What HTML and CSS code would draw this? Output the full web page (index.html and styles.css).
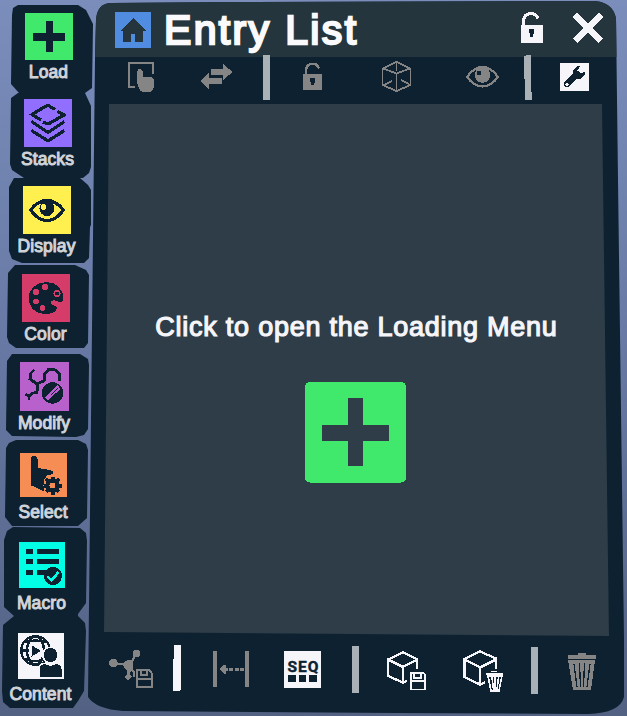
FILE: index.html
```html
<!DOCTYPE html>
<html lang="en">
<head>
<meta charset="utf-8">
<title>Entry List</title>
<link rel="stylesheet" href="styles.css">
</head>
<body>
<nav class="sidebar">
  <button class="tab load">
    <svg class="tile" viewBox="25 13 48 47"><rect class="bg" x="25" y="13" width="48" height="47" rx="1.5"/><path d="M46 21h7v12h12v8H53v11h-7V41H33v-8h13z"/></svg>
    <span class="label">Load</span>
  </button>
  <button class="tab stacks">
    <svg class="tile" viewBox="24 99 48 48"><rect class="bg" x="24" y="99" width="48" height="48" rx="1.5"/><path class="line" d="M41 120l-9-5.5L45 106.500q3-1.500 5 0l5 3M57.500 111.500L64 115l-14 8q-3 1-7-1M31.500 121.500l15 10q1.500 1 3 0l15-10M31.500 130.500l15 9.500q1.500 1 3 0l15-9.500"/></svg>
    <span class="label">Stacks</span>
  </button>
  <button class="tab display">
    <svg class="tile" viewBox="23 186 48 48"><rect class="bg" x="23" y="186" width="48" height="48" rx="1.500"/><path class="line" d="M30.500 210Q38 200.500 47 200.500T63.500 210Q56 220.500 47 220.500T30.500 210z"/><circle cx="47" cy="208.500" r="7.500"/><circle class="bg" cx="43.500" cy="207" r="2.700"/></svg>
    <span class="label">Display</span>
  </button>
  <button class="tab color">
    <svg class="tile" viewBox="21.500 274 48 48"><rect class="bg" x="21.500" y="274" width="48" height="48" rx="1.500"/><path d="M46 282C56 282 63 290 63 298C63 303 59 303 56 301C51 299 48 302 52 305C56 306 58 308 55 311C52 314 47 314 44 314C34 314 28 306 28 298C28 289 36 282 46 282z"/><g class="bg"><circle cx="44.500" cy="287" r="3"/><circle cx="35.500" cy="292" r="3"/><circle cx="35.500" cy="301.500" r="3"/><circle cx="42" cy="308" r="3"/><circle cx="56.500" cy="293.500" r="3.600"/></g><circle cx="56.500" cy="293.500" r="2"/></svg>
    <span class="label">Color</span>
  </button>
  <button class="tab modify">
    <svg class="tile" viewBox="20 362 49 49"><rect class="bg" x="20" y="362" width="49" height="49" rx="1.500"/><path class="line" stroke-width="2.800" d="M34 370l-3 3-1 6 7 5 7.500-3.500M44.500 381v-7l4-4.500h6l5 4v7M37.500 384l-.5 8.500-4 .5-4 3.500-3.500-2.500M29 396v4"/><circle cx="52.500" cy="393" r="10.700"/><path class="stroke-bg" stroke-width="4.600" d="M59 387L49 396.500l-2.500 2.500"/><path class="line" stroke-width="1.200" d="M57.500 388.500l-7 7"/></svg>
    <span class="label">Modify</span>
  </button>
  <button class="tab select">
    <svg class="tile" viewBox="20 453 47 44"><rect class="bg" x="20" y="453" width="47" height="44"/><path d="M31 459q0-3 3.200-3t3.300 3v9l9 1.500 6 1.500 1 3-6 1-4 6v10l-12-5.500z"/><circle class="bg" cx="52.500" cy="485.500" r="9"/><circle cx="52.500" cy="485.500" r="7"/><path class="line" stroke-width="4" d="M52.500 476.500v18M43.500 485.500h18M46 479l13 13M59 479l-13 13"/><circle class="bg" cx="52.500" cy="485.500" r="3"/></svg>
    <span class="label">Select</span>
  </button>
  <button class="tab macro">
    <svg class="tile" viewBox="19 542 46 46"><rect class="bg" x="19" y="542" width="46" height="46" rx="1.500"/><path d="M26 549h7v5h-7zM37 549h22v5H37zM26 559h7v5h-7zM37 559h22v5H37zM26 570h7v5h-7zM37 570h12v5H37z"/><circle cx="53" cy="576" r="9"/><path class="stroke-bg" stroke-width="2.700" d="M47.500 576.500l4 4 7-8.500"/></svg>
    <span class="label">Macro</span>
  </button>
  <button class="tab content">
    <svg class="tile" viewBox="18 633 46 46"><rect class="bg" x="18" y="633" width="46" height="46" rx="1.500"/><g class="line" stroke-width="2.300"><circle cx="35.500" cy="650.500" r="14.300"/><ellipse cx="35.500" cy="650.500" rx="8.500" ry="14"/><path d="M25 642q10-3 21 0M24 659q11 4 22 0M21 650.500h8"/></g><path d="M31.500 645l9.500 6-9.500 5.500z"/><circle class="bg" cx="50.500" cy="655" r="8.600"/><path class="bg" d="M38 678v-9q0-6 7-6.500h12q5 1 5.500 6V678z"/><circle cx="50.500" cy="655" r="7"/><path d="M39.500 677v-8q0-4 5.500-5l5.500 2 6-2q5 1 5 5v8z"/></svg>
    <span class="label">Content</span>
  </button>
</nav>

<main class="panel">
  <header class="header">
    <svg class="home" viewBox="115 12 36 36"><rect class="blue" x="115" y="12" width="36" height="36" rx="1.500"/><path class="house" d="M120 31l13-13 13 13h-3v11h-8v-8h-4v8h-8V31z"/></svg>
    <h1 class="title">Entry List</h1>
    <svg class="unlock white" viewBox="519 10 26 36"><path d="M521 25h22v18h-22z"/><path class="out" stroke-width="3.400" d="M523.500 26v-5C524 11.500 536 11.500 538 18.500"/><path class="hole" d="M529 29h5v4l-1 1v3h-3v-3l-1-1z"/></svg>
    <svg class="close white" viewBox="571 11 34 34"><path class="out" stroke-width="6" d="M575 15l26 26M601 15l-26 26"/></svg>
  </header>

  <div class="toolbar top">
    <svg viewBox="120 55 70 48"><path class="out" stroke-width="2.200" d="M135 87h-6V63h24v11"/><path d="M137.500 71q2-5 5 0v6l7-.5q4 1 4.500 4v6q-1 5-5 5.500h-6q-3-1-4-4l-2-5z"/></svg>
    <svg viewBox="190 55 65 48"><path d="M211 69h12v-5l9.500 8-9.500 8v-5h-12zM222 84h-13v6l-9-9 9-8v5h13z"/></svg>
    <svg class="pale" viewBox="255 55 25 48"><path d="M263 55h7v45h-7z"/></svg>
    <svg viewBox="280 55 65 48"><path d="M303 74h19v16h-19z"/><path class="out" stroke-width="2.400" d="M306 75v-5C307 62 317 62 319 68.500"/><path class="hole" d="M310 78h5v4l-1 1v2h-3v-2l-1-1z"/></svg>
    <svg viewBox="345 55 95 48"><path class="out" stroke-width="1.800" d="M396.500 62l14 6.500V85l-14 6-14-6V68.500zM383 68.500l13.500 5 13.500-5M396.500 73v18M396.500 62v9M384 85l8-4M409 84l-8-4"/></svg>
    <svg viewBox="440 55 75 48"><path class="out" stroke-width="2.200" d="M467 77q7-10 15.500-10T498 77q-7 9.500-15.500 9.500T467 77z"/><circle cx="482.500" cy="75" r="7.800"/><circle class="hole" cx="479" cy="73" r="2.500"/></svg>
    <svg class="pale" viewBox="515 55 30 48"><path d="M524 56l3-1h4l.5 37 .5 8h-7z"/></svg>
    <svg class="white" viewBox="545 55 60 48"><rect x="560" y="63" width="29" height="28" rx="1.500"/><path class="ink" stroke-width="6" stroke-linecap="round" d="M567 84l8-8"/><path class="hole" d="M580 66l-3 .5-4 4v4l3 4h5l4.500-4-.5-3-4.500 2-3-3z"/><circle cx="567" cy="84.500" r="1.600"/></svg>
  </div>

  <section class="stage">
    <p class="message">Click to open the Loading Menu</p>
    <svg class="add" viewBox="305 382 101 101"><rect class="green" x="305" y="382" width="101" height="100.500" rx="5"/><path class="cross" d="M348 398h15v27h26v16h-26v25h-15v-25h-26v-16h26z"/></svg>
  </section>

  <div class="toolbar bottom">
    <svg viewBox="100 640 65 60"><circle cx="113.500" cy="663" r="4.300"/><circle cx="136.500" cy="653.500" r="3.700"/><path d="M124 662l5-2.500 4 1.500v7l-2 4h-3l-4-4z"/><path class="out" stroke-width="2.400" d="M113 663l15 2M136 654l-6 11M128.500 668v9M125.500 676l2.500 3 3-3M131 669l3 3v5"/><path class="out" stroke-width="2" d="M137 670h12l2.500 3v13.500H137zM137 679h14M141 670v5h6v-5"/></svg>
    <svg class="white" viewBox="165 640 30 60"><path d="M174 645h7l-.5 46h-7L173 659h1z"/></svg>
    <svg viewBox="195 640 70 60"><path d="M213 651h4v36h-4zM245 651h4v36h-4zM219 669l5-4h2v2.500h1.500v3.500H226v2.500h-2zM229 667.500h4v3.500h-4zM234.500 667.500h4v3.500h-4zM240 667.500h3.500v3.500H240z"/></svg>
    <svg class="white" viewBox="265 640 75 60"><rect x="284" y="651" width="37" height="37" rx="1.500"/><text class="seq" x="287.500" y="672" textLength="31">SEQ</text><path class="hole" d="M288 675h8v7h-8zM299 675h7v7h-7zM309 675h8v7h-8z"/></svg>
    <svg class="pale" viewBox="340 640 30 60"><path d="M352 646h7v47h-7z"/></svg>
    <svg class="white" viewBox="370 640 75 60"><path class="out" stroke-width="2.300" d="M417 669v-10l-14-6.500-15 7V676l15 6.500 4-1.500M388 659.500l15 7.500 14-7.500M403 667v16"/><path class="out" stroke-width="1.800" d="M411 673h12.500l1.800 2v14.500H411zM411 681h14M414 673v5h7v-5"/></svg>
    <svg class="white" viewBox="445 640 75 60"><path class="out" stroke-width="2.300" d="M496 669v-10.500l-16-7-15.500 7.500V677l15.500 7.500 5-2M464.500 659.500l15.500 8 16-8M480 667v18"/><path d="M491 671h6v1h-6zM486 673h17v2h-17z"/><path class="out" stroke-width="1.600" d="M488 676l3 15h8l3-15zM492 677l1.500 13M495 677v13M498.500 677l-1.500 13"/></svg>
    <svg class="pale" viewBox="520 640 30 60"><path d="M531 647h7v47h-7z"/></svg>
    <svg viewBox="550 640 60 60"><path d="M578 653h8v2h10v4h-28v-4h10zM568 660h27l-4 30h-18z"/><path class="ink" stroke-width="1.300" d="M574 664l3 23M579.500 663l1 24M584.500 663l-1 24M590 664l-3 23"/></svg>
  </div>
</main>
</body>
</html>
```
FILE: styles.css
```css
* {
  box-sizing: border-box;
}

body {
  margin: 0;
  width: 627px;
  height: 716px;
  display: flex;
  overflow: hidden;
  background: linear-gradient(#7b8dbb, #6476a0 55%, #536183);
  font-family: "Liberation Sans", Arial, sans-serif;
}

svg {
  display: block;
  flex: none;
  shape-rendering: crispEdges;
}

/* Sidebar tabs */
.sidebar {
  width: 94px;
  margin-right: -6px;
  padding-top: 5px;
  display: flex;
  flex-direction: column;
  flex: none;
}

.tab {
  width: 94px;
  border: 0;
  padding: 0;
  display: flex;
  flex-direction: column;
  align-items: center;
  flex: none;
  background: #0d2130;
  color: #d0d4d9;
  font: inherit;
}

.tile {
  width: 48px;
  height: 48px;
  fill: #0d2130;
}

.tile .bg { fill: var(--tint); }
.tile .line { fill: none; stroke: #0d2130; }
.tile .line:not([stroke-width]) { stroke-width: 3.2; }
.tile .stroke-bg { fill: none; stroke: var(--tint); }

.label {
  margin-top: 2px;
  font-size: 17.5px;
  line-height: 20px;
  letter-spacing: 0.1px;
  -webkit-text-stroke: 1px #d0d4d9;
}

.load {
  --tint: #40e86b;
  height: 88px;
  padding: 8px 0 0 3px;
  clip-path: polygon(18px 0, 78px 0, 86px 5px, 90px 13px, 93px 19px, 92px 83px, 85px 88px, 19px 88px, 11px 79px, 12px 10px, 13px 3px);
}
.load .tile { height: 47px; }

.stacks {
  --tint: #926eff;
  height: 85px;
  padding: 6px 0 0 1px;
  clip-path: polygon(18px 0, 85px 0, 91px 13px, 91px 74px, 89px 80px, 83px 85px, 24px 85px, 12px 77px, 10px 71px, 11px 5px);
}

.display {
  --tint: #fff050;
  height: 87px;
  padding: 8px 1px 0 0;
  clip-path: polygon(14px 0, 80px 0, 88px 7px, 91px 12px, 91px 47px, 90px 49px, 89px 80px, 84px 85px, 22px 85px, 12px 81px, 9px 73px, 9px 9px);
}

.color {
  --tint: #d63c69;
  height: 88px;
  padding: 9px 3px 0 0;
  clip-path: polygon(15px 0, 75px 0, 86px 5px, 89px 10px, 88px 78px, 84px 83px, 16px 83px, 9px 78px, 7px 72px, 8px 8px);
}

.modify {
  --tint: #b860cc;
  height: 87px;
  padding: 9px 6px 0 0;
  clip-path: polygon(12px 1px, 80px 1px, 88px 6px, 89px 12px, 88px 76px, 84px 82px, 76px 84px, 12px 83px, 6px 77px, 7px 8px);
}
.modify .tile { width: 49px; height: 49px; }

.select {
  --tint: #f58d54;
  height: 87px;
  padding: 13px 8px 0 0;
  clip-path: polygon(16px 0, 78px 0, 86px 4px, 88px 10px, 87px 78px, 78px 86px, 12px 86px, 5px 77px, 6px 8px, 9px 3px);
}
.select .tile { width: 47px; height: 44px; }

.macro {
  --tint: #00ffe5;
  height: 89px;
  padding: 15px 11px 0 0;
  clip-path: polygon(13px 0, 80px 1px, 86px 6px, 87px 14px, 86px 76px, 78px 87px, 78px 89px, 14px 89px, 4px 80px, 4px 13px, 7px 4px);
}
.macro .tile,
.content .tile { width: 46px; height: 46px; }

.content {
  --tint: #f5f5fa;
  height: 92px;
  padding: 17px 13px 0 0;
  clip-path: polygon(14px 0, 78px 0, 85px 7px, 86px 15px, 84px 75px, 78px 85px, 73px 92px, 10px 92px, 3px 86px, 2px 75px, 3px 9px);
}

.select .label,
.macro .label,
.content .label { margin-top: 5px; }

/* Main panel */
.panel {
  width: 539px;
  height: 716px;
  flex: none;
  display: flex;
  flex-direction: column;
  background: #0d2130;
  clip-path: path("M7 58L8 20Q9 4 22 3L150 2L504 1Q524 1 528 18L530 180L536 640L536 697Q532 713 500 714L310 713L35 711Q8 709 0 697L3 420Z");
}

.header {
  height: 57px;
  flex: none;
  padding-left: 27px;
  display: flex;
  align-items: flex-start;
  background: #25353e;
}

.home {
  width: 36px;
  height: 36px;
  margin-top: 12px;
}
.blue { fill: #508de0; }
.house { fill: #25353e; }

.title {
  width: 354px;
  margin: 7px 0 0 13px;
  color: #fafafc;
  font-size: 41px;
  font-weight: 400;
  line-height: 46px;
  letter-spacing: 2.35px;
  white-space: nowrap;
  -webkit-text-stroke: 2.3px #fafafc;
}

.unlock {
  width: 26px;
  height: 36px;
  margin: 10px 0 0 1px;
}

.close {
  width: 34px;
  height: 34px;
  margin: 11px 0 0 26px;
}

/* Toolbars */
.toolbar {
  display: grid;
  flex: none;
  color: #858585;
}
.toolbar svg {
  width: 100%;
  height: 100%;
  fill: currentColor;
}
.toolbar.top {
  height: 48px;
  margin-top: -2px;
  padding-left: 32px;
  grid-template: 48px / 70px 65px 25px 65px 95px 75px 30px 60px;
}
.toolbar.bottom {
  height: 60px;
  margin-top: 4px;
  padding-left: 12px;
  grid-template: 60px / 65px 30px 70px 75px 30px 75px 75px 30px 60px;
}

.white { color: #f5f5fa; fill: currentColor; }
.pale { color: #a9b1b7; }
.out { fill: none; stroke: currentColor; }
.hole { fill: #0d2130; }
.ink { fill: none; stroke: #0d2130; }
.seq {
  fill: #0d2130;
  stroke: #0d2130;
  stroke-width: 0.4px;
  font: 700 15.5px "Roboto", sans-serif;
}

/* Content area */
.stage {
  width: 505px;
  height: 532px;
  flex: none;
  margin: 1px 0 0 16px;
  padding-top: 207px;
  display: flex;
  flex-direction: column;
  align-items: center;
  background: #2e3d47;
  clip-path: polygon(5px 0, 498px 0, 505px 532px, 0 528px);
}

.message {
  margin: 0;
  color: #f5f5fa;
  font-size: 27px;
  line-height: 32px;
  letter-spacing: 0.75px;
  white-space: nowrap;
  -webkit-text-stroke: 1.2px #f5f5fa;
}

.add {
  width: 101px;
  height: 101px;
  margin: 39px 2px 0 0;
}
.green { fill: #40e86b; }
.cross { fill: #2e3d47; }
```
